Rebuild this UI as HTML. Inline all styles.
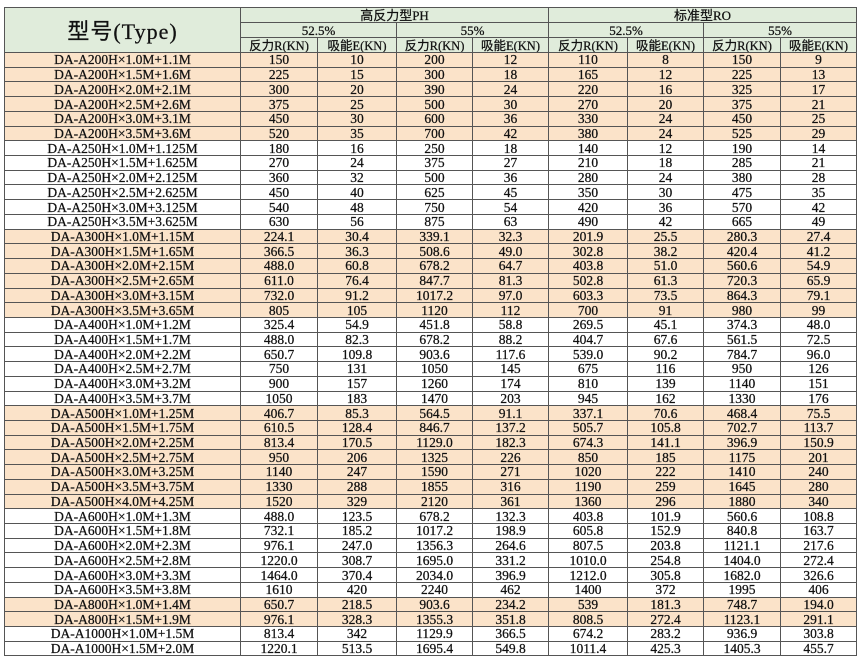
<!DOCTYPE html>
<html><head><meta charset="utf-8"><style>
html,body{margin:0;padding:0;background:#fff;width:860px;height:663px;overflow:hidden}
table{position:absolute;left:4px;top:7px;width:852px;border-collapse:collapse;table-layout:fixed;font-family:"Liberation Serif",serif;font-size:13.5px;color:#111;-webkit-text-stroke:0.25px #111}
td{border:1px solid #555;text-align:center;padding:1px 0 0 0;line-height:12px;height:12.73px;overflow:hidden;white-space:nowrap}
.h td{background:#e0ecdb;height:13px;font-family:"Liberation Serif","Noto Sans CJK SC",sans-serif;font-size:13px}
.h3 td{font-size:12.5px}
td.ty{font-size:22px;letter-spacing:1px;line-height:24px}
td.ty .c{font-family:"Noto Sans CJK SC",sans-serif}
td.ty .l{font-family:"Liberation Serif",serif}
.o td{background:#fbe3c9}
</style></head><body>
<table>
<colgroup><col style="width:236px"><col style="width:77px"><col style="width:79px"><col style="width:76px"><col style="width:76px"><col style="width:79px"><col style="width:76px"><col style="width:77px"><col style="width:76px"></colgroup>
<tr class="h"><td rowspan="3" class="ty"><span class="c">型号</span><span class="l">(Type)</span></td><td colspan="4">高反力型PH</td><td colspan="4">标准型RO</td></tr>
<tr class="h"><td colspan="2">52.5%</td><td colspan="2">55%</td><td colspan="2">52.5%</td><td colspan="2">55%</td></tr>
<tr class="h h3"><td>反力R(KN)</td><td>吸能E(KN)</td><td>反力R(KN)</td><td>吸能E(KN)</td><td>反力R(KN)</td><td>吸能E(KN)</td><td>反力R(KN)</td><td>吸能E(KN)</td></tr>
<tr class="o"><td>DA-A200H×1.0M+1.1M</td><td>150</td><td>10</td><td>200</td><td>12</td><td>110</td><td>8</td><td>150</td><td>9</td></tr>
<tr class="o"><td>DA-A200H×1.5M+1.6M</td><td>225</td><td>15</td><td>300</td><td>18</td><td>165</td><td>12</td><td>225</td><td>13</td></tr>
<tr class="o"><td>DA-A200H×2.0M+2.1M</td><td>300</td><td>20</td><td>390</td><td>24</td><td>220</td><td>16</td><td>325</td><td>17</td></tr>
<tr class="o"><td>DA-A200H×2.5M+2.6M</td><td>375</td><td>25</td><td>500</td><td>30</td><td>270</td><td>20</td><td>375</td><td>21</td></tr>
<tr class="o"><td>DA-A200H×3.0M+3.1M</td><td>450</td><td>30</td><td>600</td><td>36</td><td>330</td><td>24</td><td>450</td><td>25</td></tr>
<tr class="o"><td>DA-A200H×3.5M+3.6M</td><td>520</td><td>35</td><td>700</td><td>42</td><td>380</td><td>24</td><td>525</td><td>29</td></tr>
<tr><td>DA-A250H×1.0M+1.125M</td><td>180</td><td>16</td><td>250</td><td>18</td><td>140</td><td>12</td><td>190</td><td>14</td></tr>
<tr><td>DA-A250H×1.5M+1.625M</td><td>270</td><td>24</td><td>375</td><td>27</td><td>210</td><td>18</td><td>285</td><td>21</td></tr>
<tr><td>DA-A250H×2.0M+2.125M</td><td>360</td><td>32</td><td>500</td><td>36</td><td>280</td><td>24</td><td>380</td><td>28</td></tr>
<tr><td>DA-A250H×2.5M+2.625M</td><td>450</td><td>40</td><td>625</td><td>45</td><td>350</td><td>30</td><td>475</td><td>35</td></tr>
<tr><td>DA-A250H×3.0M+3.125M</td><td>540</td><td>48</td><td>750</td><td>54</td><td>420</td><td>36</td><td>570</td><td>42</td></tr>
<tr><td>DA-A250H×3.5M+3.625M</td><td>630</td><td>56</td><td>875</td><td>63</td><td>490</td><td>42</td><td>665</td><td>49</td></tr>
<tr class="o"><td>DA-A300H×1.0M+1.15M</td><td>224.1</td><td>30.4</td><td>339.1</td><td>32.3</td><td>201.9</td><td>25.5</td><td>280.3</td><td>27.4</td></tr>
<tr class="o"><td>DA-A300H×1.5M+1.65M</td><td>366.5</td><td>36.3</td><td>508.6</td><td>49.0</td><td>302.8</td><td>38.2</td><td>420.4</td><td>41.2</td></tr>
<tr class="o"><td>DA-A300H×2.0M+2.15M</td><td>488.0</td><td>60.8</td><td>678.2</td><td>64.7</td><td>403.8</td><td>51.0</td><td>560.6</td><td>54.9</td></tr>
<tr class="o"><td>DA-A300H×2.5M+2.65M</td><td>611.0</td><td>76.4</td><td>847.7</td><td>81.3</td><td>502.8</td><td>61.3</td><td>720.3</td><td>65.9</td></tr>
<tr class="o"><td>DA-A300H×3.0M+3.15M</td><td>732.0</td><td>91.2</td><td>1017.2</td><td>97.0</td><td>603.3</td><td>73.5</td><td>864.3</td><td>79.1</td></tr>
<tr class="o"><td>DA-A300H×3.5M+3.65M</td><td>805</td><td>105</td><td>1120</td><td>112</td><td>700</td><td>91</td><td>980</td><td>99</td></tr>
<tr><td>DA-A400H×1.0M+1.2M</td><td>325.4</td><td>54.9</td><td>451.8</td><td>58.8</td><td>269.5</td><td>45.1</td><td>374.3</td><td>48.0</td></tr>
<tr><td>DA-A400H×1.5M+1.7M</td><td>488.0</td><td>82.3</td><td>678.2</td><td>88.2</td><td>404.7</td><td>67.6</td><td>561.5</td><td>72.5</td></tr>
<tr><td>DA-A400H×2.0M+2.2M</td><td>650.7</td><td>109.8</td><td>903.6</td><td>117.6</td><td>539.0</td><td>90.2</td><td>784.7</td><td>96.0</td></tr>
<tr><td>DA-A400H×2.5M+2.7M</td><td>750</td><td>131</td><td>1050</td><td>145</td><td>675</td><td>116</td><td>950</td><td>126</td></tr>
<tr><td>DA-A400H×3.0M+3.2M</td><td>900</td><td>157</td><td>1260</td><td>174</td><td>810</td><td>139</td><td>1140</td><td>151</td></tr>
<tr><td>DA-A400H×3.5M+3.7M</td><td>1050</td><td>183</td><td>1470</td><td>203</td><td>945</td><td>162</td><td>1330</td><td>176</td></tr>
<tr class="o"><td>DA-A500H×1.0M+1.25M</td><td>406.7</td><td>85.3</td><td>564.5</td><td>91.1</td><td>337.1</td><td>70.6</td><td>468.4</td><td>75.5</td></tr>
<tr class="o"><td>DA-A500H×1.5M+1.75M</td><td>610.5</td><td>128.4</td><td>846.7</td><td>137.2</td><td>505.7</td><td>105.8</td><td>702.7</td><td>113.7</td></tr>
<tr class="o"><td>DA-A500H×2.0M+2.25M</td><td>813.4</td><td>170.5</td><td>1129.0</td><td>182.3</td><td>674.3</td><td>141.1</td><td>396.9</td><td>150.9</td></tr>
<tr class="o"><td>DA-A500H×2.5M+2.75M</td><td>950</td><td>206</td><td>1325</td><td>226</td><td>850</td><td>185</td><td>1175</td><td>201</td></tr>
<tr class="o"><td>DA-A500H×3.0M+3.25M</td><td>1140</td><td>247</td><td>1590</td><td>271</td><td>1020</td><td>222</td><td>1410</td><td>240</td></tr>
<tr class="o"><td>DA-A500H×3.5M+3.75M</td><td>1330</td><td>288</td><td>1855</td><td>316</td><td>1190</td><td>259</td><td>1645</td><td>280</td></tr>
<tr class="o"><td>DA-A500H×4.0M+4.25M</td><td>1520</td><td>329</td><td>2120</td><td>361</td><td>1360</td><td>296</td><td>1880</td><td>340</td></tr>
<tr><td>DA-A600H×1.0M+1.3M</td><td>488.0</td><td>123.5</td><td>678.2</td><td>132.3</td><td>403.8</td><td>101.9</td><td>560.6</td><td>108.8</td></tr>
<tr><td>DA-A600H×1.5M+1.8M</td><td>732.1</td><td>185.2</td><td>1017.2</td><td>198.9</td><td>605.8</td><td>152.9</td><td>840.8</td><td>163.7</td></tr>
<tr><td>DA-A600H×2.0M+2.3M</td><td>976.1</td><td>247.0</td><td>1356.3</td><td>264.6</td><td>807.5</td><td>203.8</td><td>1121.1</td><td>217.6</td></tr>
<tr><td>DA-A600H×2.5M+2.8M</td><td>1220.0</td><td>308.7</td><td>1695.0</td><td>331.2</td><td>1010.0</td><td>254.8</td><td>1404.0</td><td>272.4</td></tr>
<tr><td>DA-A600H×3.0M+3.3M</td><td>1464.0</td><td>370.4</td><td>2034.0</td><td>396.9</td><td>1212.0</td><td>305.8</td><td>1682.0</td><td>326.6</td></tr>
<tr><td>DA-A600H×3.5M+3.8M</td><td>1610</td><td>420</td><td>2240</td><td>462</td><td>1400</td><td>372</td><td>1995</td><td>406</td></tr>
<tr class="o"><td>DA-A800H×1.0M+1.4M</td><td>650.7</td><td>218.5</td><td>903.6</td><td>234.2</td><td>539</td><td>181.3</td><td>748.7</td><td>194.0</td></tr>
<tr class="o"><td>DA-A800H×1.5M+1.9M</td><td>976.1</td><td>328.3</td><td>1355.3</td><td>351.8</td><td>808.5</td><td>272.4</td><td>1123.1</td><td>291.1</td></tr>
<tr><td>DA-A1000H×1.0M+1.5M</td><td>813.4</td><td>342</td><td>1129.9</td><td>366.5</td><td>674.2</td><td>283.2</td><td>936.9</td><td>303.8</td></tr>
<tr><td>DA-A1000H×1.5M+2.0M</td><td>1220.1</td><td>513.5</td><td>1695.4</td><td>549.8</td><td>1011.4</td><td>425.3</td><td>1405.3</td><td>455.7</td></tr>
</table>
</body></html>
